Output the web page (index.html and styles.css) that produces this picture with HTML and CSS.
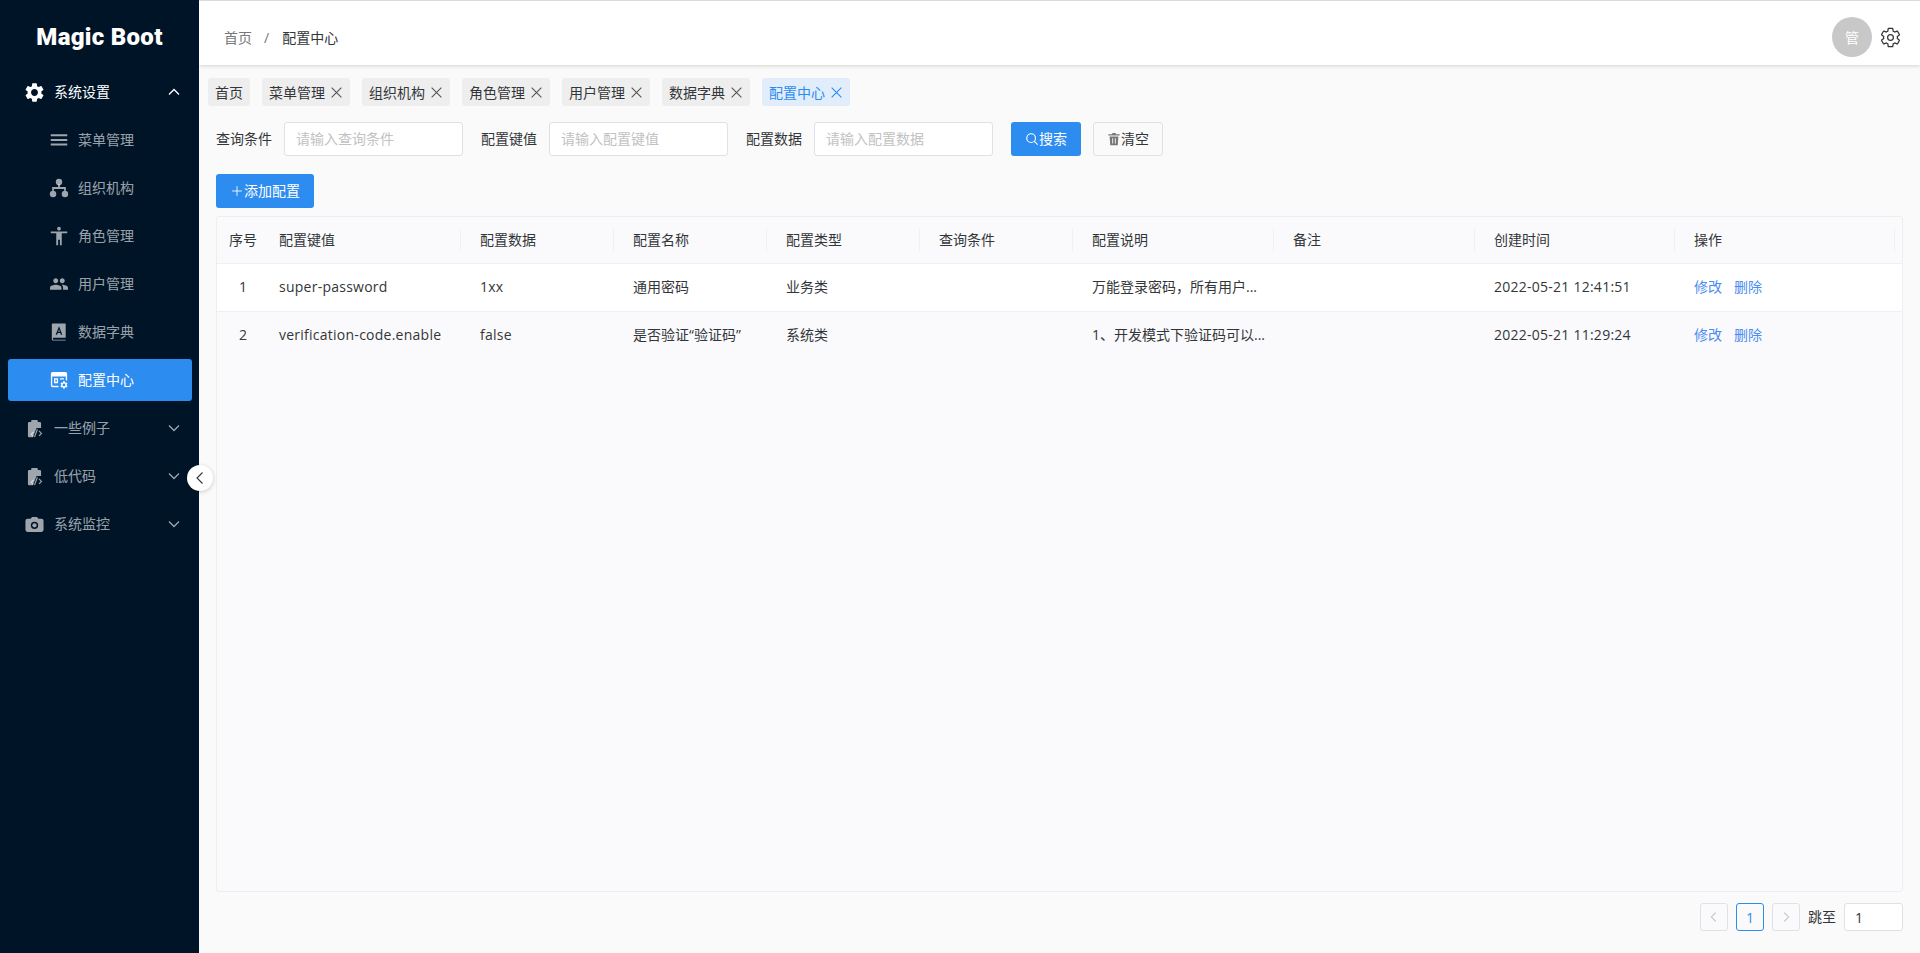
FILE: index.html
```html
<!DOCTYPE html>
<html lang="zh-CN">
<head>
    <meta charset="UTF-8">
    <meta name="viewport" content="width=device-width, initial-scale=1.0">
    <title>Magic Boot</title>
    <link rel="stylesheet" href="styles.css">
</head>
<body>
    <svg class="icon-defs" width="0" height="0">
        <symbol id="i-gear" viewBox="0 0 24 24"><path d="M19.14 12.94c.04-.3.06-.61.06-.94 0-.32-.02-.64-.07-.94l2.03-1.58a.49.49 0 0 0 .12-.61l-1.92-3.32a.488.488 0 0 0-.59-.22l-2.39.96c-.5-.38-1.03-.7-1.62-.94l-.36-2.54a.484.484 0 0 0-.48-.41h-3.84c-.24 0-.43.17-.47.41l-.36 2.54c-.59.24-1.13.57-1.62.94l-2.39-.96c-.22-.08-.47 0-.59.22L2.74 8.87c-.12.21-.08.47.12.61l2.03 1.58c-.05.3-.09.63-.09.94s.02.64.07.94l-2.03 1.58a.49.49 0 0 0-.12.61l1.92 3.32c.12.22.37.29.59.22l2.39-.96c.5.38 1.03.7 1.62.94l.36 2.54c.05.24.24.41.48.41h3.84c.24 0 .44-.17.47-.41l.36-2.54c.59-.24 1.13-.56 1.62-.94l2.39.96c.22.08.47 0 .59-.22l1.92-3.32c.12-.22.07-.47-.12-.61l-2.01-1.58zM12 15.6c-1.98 0-3.6-1.62-3.6-3.6s1.62-3.6 3.6-3.6 3.6 1.62 3.6 3.6-1.62 3.6-3.6 3.6z"/></symbol>
        <symbol id="i-clip" viewBox="-2 -2 28 28"><path d="M9 1.500h6a1 1 0 0 1 1 1V4h2.500A1.500 1.500 0 0 1 20 5.500V11.500h-5.500L10 22.500H5.500A1.500 1.500 0 0 1 4 21V5.500A1.500 1.500 0 0 1 5.500 4H8V2.500a1 1 0 0 1 1-1z"/><path d="M15.500 13l-3.500 9.500M11 16l-3 3 2.500 2.500M17.500 15l3 3-3 3" fill="none" stroke="currentColor" stroke-width="1.400"/></symbol>
        <symbol id="i-down" viewBox="0 0 16 16"><path d="M3 5.500l5 5 5-5" fill="none" stroke="currentColor" stroke-width="1.300"/></symbol>
        <symbol id="i-up" viewBox="0 0 16 16"><path d="M3 10.500l5-5 5 5" fill="none" stroke="currentColor" stroke-width="1.300"/></symbol>
        <symbol id="i-close" viewBox="0 0 12 12"><path d="M1.500 1.500l9 9M10.500 1.500l-9 9" fill="none" stroke="currentColor" stroke-width="1"/></symbol>
    </svg>

    <div class="layout">
        <aside class="sidebar">
            <div class="logo">Magic Boot</div>
            <nav class="menu">
                <div class="menu-item parent open">
                    <svg class="menu-icon"><use href="#i-gear"/></svg>
                    <span class="menu-label">系统设置</span>
                    <svg class="arrow"><use href="#i-up"/></svg>
                </div>
                <div class="menu-item sub">
                    <svg class="menu-icon" viewBox="0 0 24 24"><path d="M3 18h18v-2.200H3V18zm0-5h18v-2.200H3V13zm0-7.200V8h18V5.800H3z"/></svg>
                    <span class="menu-label">菜单管理</span>
                </div>
                <div class="menu-item sub">
                    <svg class="menu-icon" viewBox="0 0 24 24"><circle cx="12" cy="5.500" r="3.500"/><circle cx="5.500" cy="18.500" r="3.500"/><circle cx="18.500" cy="18.500" r="3.500"/><path d="M11 8h2v3h6.500v4h-2v-2h-11v2h-2v-4H11z"/></svg>
                    <span class="menu-label">组织机构</span>
                </div>
                <div class="menu-item sub">
                    <svg class="menu-icon" viewBox="0 0 24 24"><path d="M12 2c1.100 0 2 .9 2 2s-.9 2-2 2-2-.9-2-2 .9-2 2-2zm9 7h-6v13h-2v-6h-2v6H9V9H3V7h18v2z"/></svg>
                    <span class="menu-label">角色管理</span>
                </div>
                <div class="menu-item sub">
                    <svg class="menu-icon" viewBox="-1.450 -1.450 26.900 26.900"><path d="M16 11c1.660 0 2.990-1.340 2.990-3S17.660 5 16 5c-1.660 0-3 1.340-3 3s1.340 3 3 3zm-8 0c1.660 0 2.990-1.340 2.990-3S9.660 5 8 5C6.340 5 5 6.340 5 8s1.340 3 3 3zm0 2c-2.330 0-7 1.170-7 3.500V19h14v-2.500c0-2.330-4.670-3.500-7-3.500zm8 0c-.29 0-.62.02-.97.05 1.160.84 1.970 1.970 1.970 3.450V19h6v-2.500c0-2.330-4.670-3.500-7-3.500z"/></svg>
                    <span class="menu-label">用户管理</span>
                </div>
                <div class="menu-item sub">
                    <svg class="menu-icon" viewBox="-1.500 -1.500 23 23"><path fill-rule="evenodd" d="M3.500 1h13a.5.5 0 0 1 .5.5V16H4.500a1 1 0 0 0 0 2H17v1H4a1.500 1.500 0 0 1-1.500-1.500V2a1 1 0 0 1 1-1zM10 4L6.500 13H8l.7-2h2.600l.7 2h1.500L10 4zm0 3l.9 2.800H9.100L10 7z"/></svg>
                    <span class="menu-label">数据字典</span>
                </div>
                <div class="menu-item sub active">
                    <svg class="menu-icon" viewBox="-2.200 -2.200 24.400 24.400"><path d="M3 1h14a2 2 0 0 1 2 2v7.500h-1.500V6h-15v10a.5.5 0 0 0 .5.5h6.500V18H3a2 2 0 0 1-2-2V3a2 2 0 0 1 2-2z"/><path fill-rule="evenodd" d="M4.500 8H9v5.500H4.500V8zM6 9.500V12h1.500V9.500H6zM11 8h4.500v1.500H11z"/><use href="#i-gear" x="10.500" y="10.500" width="10" height="10"/></svg>
                    <span class="menu-label">配置中心</span>
                </div>
                <div class="menu-item parent">
                    <svg class="menu-icon"><use href="#i-clip"/></svg>
                    <span class="menu-label">一些例子</span>
                    <svg class="arrow"><use href="#i-down"/></svg>
                </div>
                <div class="menu-item parent">
                    <svg class="menu-icon"><use href="#i-clip"/></svg>
                    <span class="menu-label">低代码</span>
                    <svg class="arrow"><use href="#i-down"/></svg>
                </div>
                <div class="menu-item parent">
                    <svg class="menu-icon" viewBox="-2 -2 28 28"><path fill-rule="evenodd" d="M9 3L7.170 5H3.500A2.500 2.500 0 0 0 1 7.500v11A2.500 2.500 0 0 0 3.500 21h17a2.500 2.500 0 0 0 2.500-2.500v-11A2.500 2.500 0 0 0 20.500 5h-3.670L15 3H9zm3 14.500a4.500 4.500 0 1 1 0-9 4.500 4.500 0 0 1 0 9z"/><circle cx="12" cy="13" r="2.600"/></svg>
                    <span class="menu-label">系统监控</span>
                    <svg class="arrow"><use href="#i-down"/></svg>
                </div>
            </nav>
            <button class="collapse-btn">
                <svg viewBox="0 0 16 16" width="16" height="16"><path d="M10.500 2.500L5 8l5.500 5.500" fill="none" stroke="#333" stroke-width="1.100"/></svg>
            </button>
        </aside>

        <div class="main">
            <header class="topbar">
                <div class="breadcrumb">
                    <span class="crumb">首页</span>
                    <span class="crumb-sep">/</span>
                    <span class="crumb current">配置中心</span>
                </div>
                <div class="top-right">
                    <div class="avatar">管</div>
                    <svg class="top-gear" viewBox="0 0 24 24"><path d="M19.140 12.940c.04-.3.06-.61.06-.94 0-.32-.02-.64-.07-.94l2.030-1.580a.49.49 0 0 0 .12-.61l-1.920-3.320a.488.488 0 0 0-.59-.22l-2.390.96c-.5-.38-1.030-.7-1.620-.94l-.36-2.540a.484.484 0 0 0-.48-.41h-3.840c-.24 0-.43.17-.47.41l-.36 2.540c-.59.24-1.130.57-1.620.94l-2.390-.96c-.22-.08-.47 0-.59.22L2.740 8.870c-.12.21-.08.47.12.61l2.030 1.580c-.05.3-.09.63-.09.94s.02.64.07.94l-2.030 1.580a.49.49 0 0 0-.12.61l1.920 3.320c.12.22.37.29.59.22l2.390-.96c.5.38 1.030.7 1.620.94l.36 2.540c.05.24.24.41.48.41h3.840c.24 0 .44-.17.47-.41l.36-2.540c.59-.24 1.130-.56 1.620-.94l2.390.96c.22.08.47 0 .59-.22l1.920-3.320c.12-.22.07-.47-.12-.61l-2.010-1.580z" fill="none" stroke="#333" stroke-width="1.300"/><circle cx="12" cy="12" r="3" fill="none" stroke="#333" stroke-width="1.300"/></svg>
                </div>
            </header>

            <div class="tabs">
                <span class="tab first">首页</span>
                <span class="tab">菜单管理<svg class="tab-close"><use href="#i-close"/></svg></span>
                <span class="tab">组织机构<svg class="tab-close"><use href="#i-close"/></svg></span>
                <span class="tab">角色管理<svg class="tab-close"><use href="#i-close"/></svg></span>
                <span class="tab">用户管理<svg class="tab-close"><use href="#i-close"/></svg></span>
                <span class="tab">数据字典<svg class="tab-close"><use href="#i-close"/></svg></span>
                <span class="tab current">配置中心<svg class="tab-close"><use href="#i-close"/></svg></span>
            </div>

            <div class="content">
                <div class="search-row">
                    <label class="search-label">查询条件</label>
                    <input class="search-input" type="text" placeholder="请输入查询条件">
                    <label class="search-label">配置键值</label>
                    <input class="search-input" type="text" placeholder="请输入配置键值">
                    <label class="search-label">配置数据</label>
                    <input class="search-input" type="text" placeholder="请输入配置数据">
                    <button class="btn primary search-btn">
                        <svg class="btn-icon" viewBox="0 0 16 16"><circle cx="7" cy="7" r="5" fill="none" stroke="currentColor" stroke-width="1.300"/><path d="M10.700 10.700l3.800 3.800" stroke="currentColor" stroke-width="1.300"/></svg>搜索
                    </button>
                    <button class="btn clear-btn">
                        <svg class="btn-icon grey" viewBox="0 0 16 16"><path d="M6 1h4v1.500h4.500V4h-13V2.500H6zM3 5h10l-.7 10H3.700zM6 7v6h1V7zm3 0v6h1V7z"/></svg>清空
                    </button>
                </div>

                <div class="tool-row">
                    <button class="btn primary add-btn">
                        <svg class="btn-icon plus" viewBox="0 0 16 16"><path d="M8 2.500v11M2.500 8h11" stroke="currentColor" stroke-width="1"/></svg>添加配置
                    </button>
                </div>

                <div class="table-box">
                    <table class="data-table">
                        <colgroup>
                            <col class="c-index"><col class="c-wide"><col class="c-mid"><col class="c-mid"><col class="c-mid"><col class="c-mid"><col class="c-wide"><col class="c-wide"><col class="c-time"><col>
                        </colgroup>
                        <thead>
                            <tr>
                                <th class="index">序号</th>
                                <th>配置键值</th>
                                <th>配置数据</th>
                                <th>配置名称</th>
                                <th>配置类型</th>
                                <th>查询条件</th>
                                <th>配置说明</th>
                                <th>备注</th>
                                <th>创建时间</th>
                                <th class="last">操作</th>
                            </tr>
                        </thead>
                        <tbody>
                            <tr>
                                <td class="index">1</td>
                                <td class="latin">super-password</td>
                                <td class="latin">1xx</td>
                                <td>通用密码</td>
                                <td>业务类</td>
                                <td></td>
                                <td>万能登录密码，所有用户...</td>
                                <td></td>
                                <td class="latin">2022-05-21 12:41:51</td>
                                <td><a class="link">修改</a><a class="link">删除</a></td>
                            </tr>
                            <tr class="alt">
                                <td class="index">2</td>
                                <td class="latin">verification-code.enable</td>
                                <td class="latin">false</td>
                                <td>是否验证“验证码”</td>
                                <td>系统类</td>
                                <td></td>
                                <td>1、开发模式下验证码可以...</td>
                                <td></td>
                                <td class="latin">2022-05-21 11:29:24</td>
                                <td><a class="link">修改</a><a class="link">删除</a></td>
                            </tr>
                        </tbody>
                    </table>
                </div>

                <div class="pager">
                    <span class="page-btn disabled"><svg viewBox="0 0 16 16" width="14" height="14"><path d="M10 3L5 8l5 5" fill="none" stroke="currentColor" stroke-width="1.200"/></svg></span>
                    <span class="page-btn current">1</span>
                    <span class="page-btn disabled"><svg viewBox="0 0 16 16" width="14" height="14"><path d="M6 3l5 5-5 5" fill="none" stroke="currentColor" stroke-width="1.200"/></svg></span>
                    <span class="jump-label">跳至</span>
                    <input class="jump-input" type="text" value="1">
                </div>
            </div>
        </div>
    </div>
</body>
</html>
```

FILE: styles.css
```css
* {
    box-sizing: border-box;
}

html, body {
    height: 100%;
}

body {
    margin: 0;
    font-family: "Open Sans", "Noto Sans CJK SC", sans-serif;
    font-size: 14px;
    color: #333639;
    background-color: #fafafa;
    overflow: hidden;
}

.icon-defs {
    position: absolute;
}

.layout {
    display: flex;
    height: 100%;
    border-top: 1px solid #e4e4e4;
}

/* sidebar */
.sidebar {
    position: relative;
    width: 199px;
    flex-shrink: 0;
    background-color: #001428;
    margin-top: -1px;
}

.logo {
    height: 68px;
    padding-top: 6px;
    display: flex;
    align-items: center;
    justify-content: center;
    font-family: "Roboto", sans-serif;
    font-weight: 900;
    font-size: 24px;
    letter-spacing: 0.3px;
    color: #fff;
}

.menu {
    display: flex;
    flex-direction: column;
    gap: 6px;
    padding: 3px 7px 0 8px;
}

.menu-item {
    position: relative;
    display: flex;
    align-items: center;
    height: 42px;
    padding: 0 0 2px 15px;
    border-radius: 3px;
    color: rgba(255, 255, 255, 0.62);
    fill: currentColor;
}

.menu-item.open {
    color: #fff;
}

.menu-item.sub {
    padding-left: 40px;
}

.menu-item.active {
    background-color: #2d8cf0;
    color: #fff;
}

.menu-icon {
    width: 23px;
    height: 23px;
    flex-shrink: 0;
    margin-right: 8px;
    margin-top: 2px;
}

.menu-item.sub .menu-icon {
    width: 22px;
    height: 22px;
}

.arrow {
    position: absolute;
    right: 10px;
    top: 13px;
    width: 16px;
    height: 16px;
}

.collapse-btn {
    position: absolute;
    left: 187px;
    top: 465px;
    width: 26px;
    height: 26px;
    padding: 0;
    border: none;
    border-radius: 50%;
    background-color: #fff;
    box-shadow: 0 1px 4px rgba(0, 0, 0, 0.2);
    display: flex;
    align-items: center;
    justify-content: center;
    z-index: 5;
}

/* main area */
.main {
    flex: 1;
    min-width: 0;
    display: flex;
    flex-direction: column;
}

.topbar {
    height: 64px;
    flex-shrink: 0;
    background-color: #fff;
    box-shadow: 0 1px 4px rgba(0, 0, 0, 0.16);
    display: flex;
    align-items: center;
    justify-content: space-between;
    padding: 8px 18px 0 25px;
}

.breadcrumb {
    display: flex;
    align-items: center;
    color: #76787b;
}

.crumb-sep {
    margin: 0 13px 0 12px;
}

.crumb.current {
    color: #333639;
}

.top-right {
    display: flex;
    align-items: center;
    gap: 7px;
}

.avatar {
    width: 40px;
    height: 40px;
    border-radius: 50%;
    background-color: #c8c8c8;
    color: #fff;
    display: flex;
    align-items: center;
    justify-content: center;
}

.top-gear {
    width: 23px;
    height: 23px;
}

.tabs {
    display: flex;
    gap: 12px;
    padding: 13px 9px 0;
}

.tab {
    display: inline-flex;
    align-items: center;
    height: 28px;
    padding: 0 7px;
    border-radius: 3px;
    background-color: #eee;
}

.tab.current {
    background-color: #e1edfb;
    color: #2d8cf0;
}

.tab-close {
    width: 13px;
    height: 13px;
    margin-left: 5px;
    color: #555;
}

.tab.current .tab-close {
    color: #2d8cf0;
}

.content {
    flex: 1;
    min-height: 0;
    display: flex;
    flex-direction: column;
    padding: 16px 17px 0;
}

.search-row {
    display: flex;
    align-items: center;
    height: 34px;
}

.search-label {
    width: 56px;
    margin-right: 12px;
    padding-bottom: 2px;
    white-space: nowrap;
}

.search-input {
    width: 179px;
    height: 34px;
    padding: 0 11px 2px;
    margin-right: 18px;
    border: 1px solid #e0e0e6;
    border-radius: 3px;
    background-color: #fff;
    font: inherit;
    color: #333639;
    outline: none;
}

.search-input::placeholder {
    color: #c2c2c2;
}

.btn {
    display: inline-flex;
    align-items: center;
    justify-content: center;
    height: 34px;
    padding: 0 0 2px;
    border: 1px solid #e0e0e6;
    border-radius: 3px;
    background-color: transparent;
    font: inherit;
    color: #333639;
}

.btn.primary {
    border: none;
    background-color: #2d8cf0;
    color: #fff;
}

.search-btn {
    width: 70px;
}

.clear-btn {
    width: 70px;
    margin-left: 12px;
}

.add-btn {
    width: 98px;
}

.btn-icon {
    width: 14px;
    height: 14px;
    margin-top: 2px;
}

.btn-icon.grey {
    fill: #777;
}

.tool-row {
    display: flex;
    margin-top: 18px;
}

.table-box {
    flex: 1;
    min-height: 0;
    margin-top: 8px;
    border: 1px solid #eeeeee;
    border-radius: 3px;
    background-color: #fafafc;
    overflow: hidden;
}

.data-table {
    width: 100%;
    table-layout: fixed;
    border-collapse: collapse;
}

.c-index { width: 46px; }
.c-wide { width: 201px; }
.c-mid { width: 153px; }
.c-time { width: 200px; }

.data-table th,
.data-table td {
    height: 48px;
    padding: 0 10px 2px 16px;
    text-align: left;
    font-weight: 400;
    white-space: nowrap;
    overflow: hidden;
    border-bottom: 1px solid #efeff5;
}

.data-table tr.alt td {
    border-bottom: none;
}

.data-table th {
    position: relative;
    height: 46px;
    background-color: #fafafc;
}

.data-table th::after {
    content: "";
    position: absolute;
    right: 3px;
    top: 12px;
    bottom: 12px;
    width: 1px;
    background-color: #efeff5;
}

.data-table th.index::after {
    display: none;
}

.data-table th.last::after {
    right: 7px;
}

.data-table .index {
    padding: 0 0 2px 6px;
    text-align: center;
}

.data-table .latin {
    letter-spacing: 0.25px;
}

.data-table tbody tr {
    background-color: #fff;
}

.data-table tbody tr.alt {
    background-color: #fafafc;
}

.link {
    color: #4a8df0;
    margin-right: 12px;
}

.pager {
    height: 61px;
    flex-shrink: 0;
    display: flex;
    align-items: flex-start;
    justify-content: flex-end;
    gap: 8px;
    padding-top: 11px;
}

.page-btn {
    width: 28px;
    height: 28px;
    display: flex;
    align-items: center;
    justify-content: center;
    border: 1px solid #e0e0e6;
    border-radius: 3px;
    color: #333639;
}

.page-btn.disabled {
    background-color: #fafafc;
    color: #c2c2c2;
}

.page-btn.current {
    border-color: #2d8cf0;
    color: #2d8cf0;
}

.jump-label {
    line-height: 27px;
}

.jump-input {
    width: 59px;
    height: 28px;
    padding: 0 10px;
    border: 1px solid #e0e0e6;
    border-radius: 3px;
    background-color: #fff;
    font: inherit;
    color: #333639;
    outline: none;
}
```
